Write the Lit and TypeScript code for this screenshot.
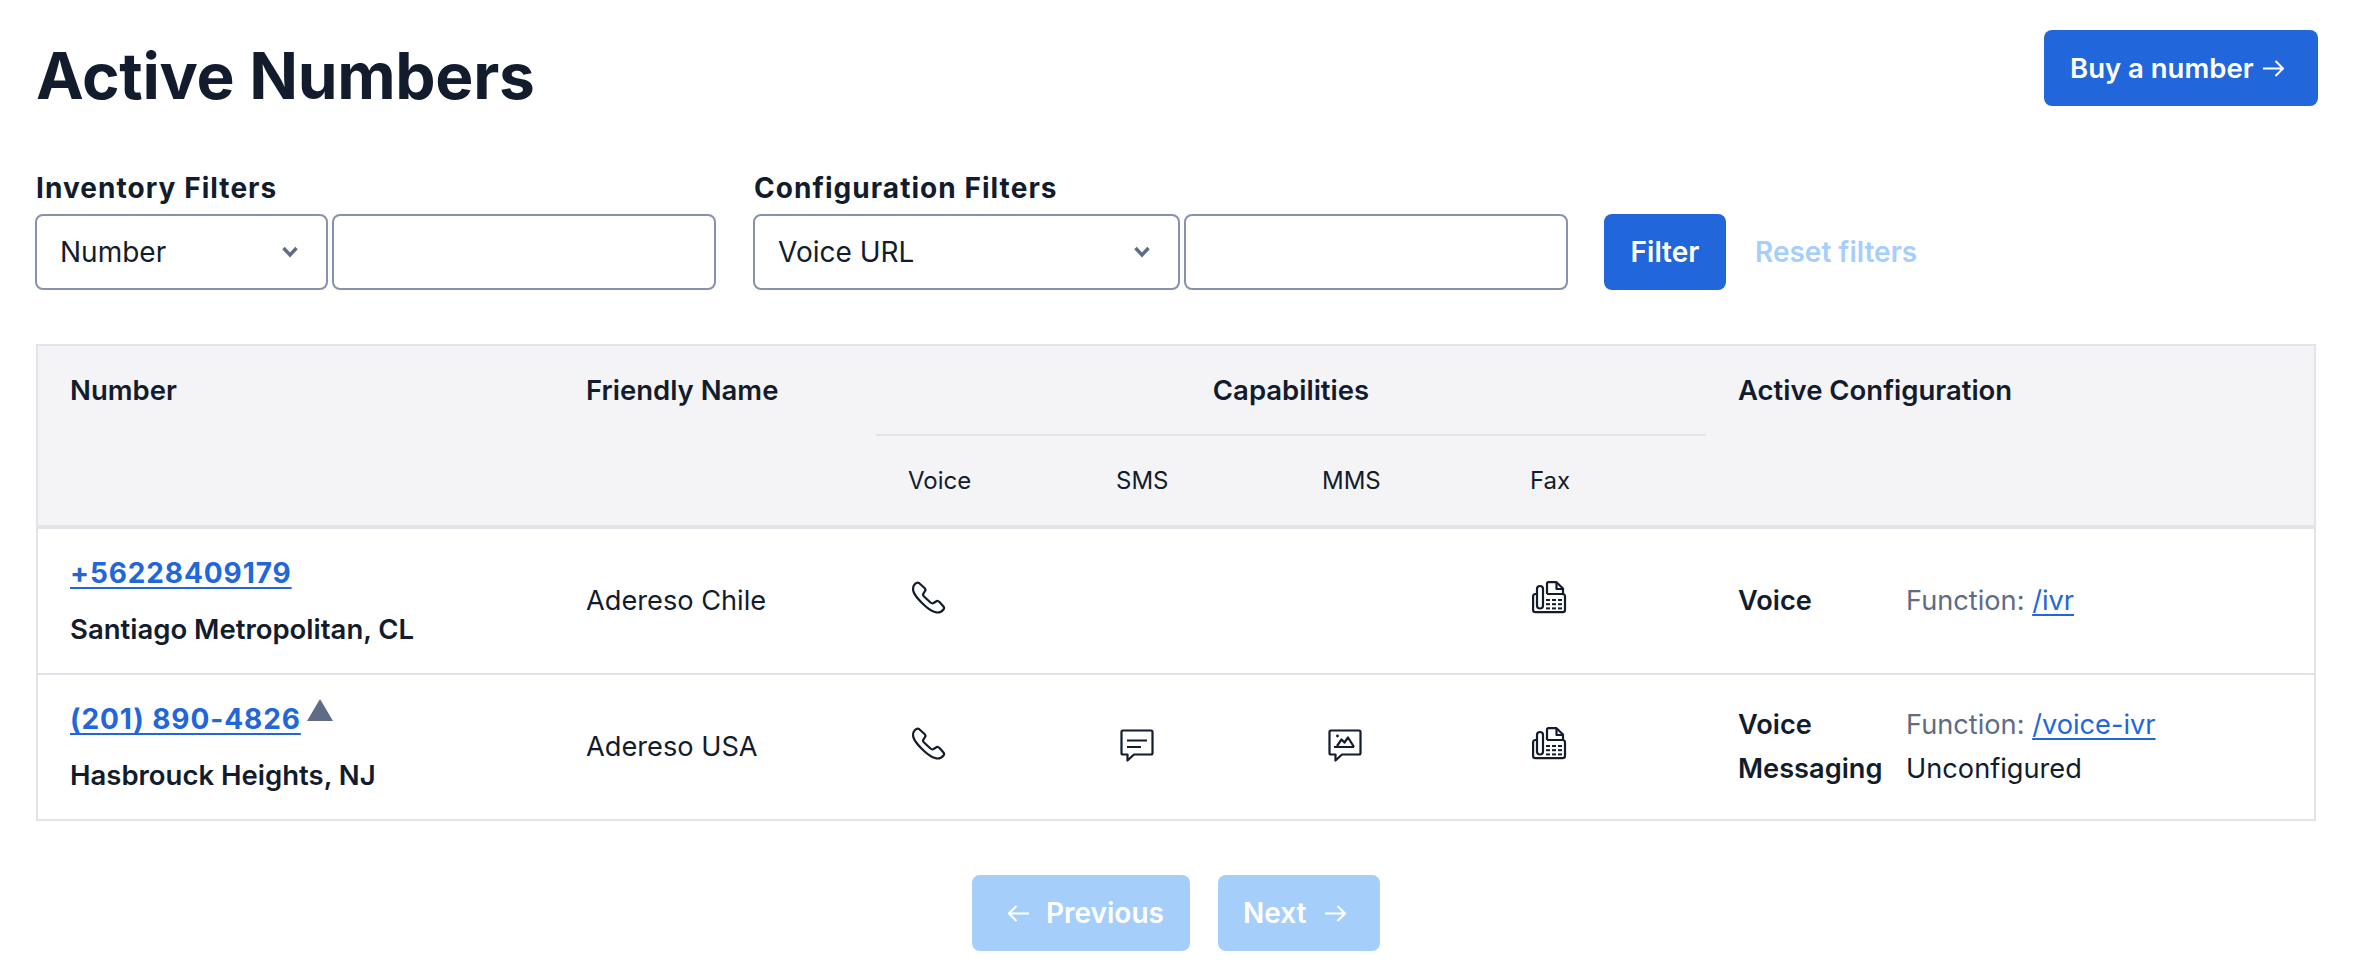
import { LitElement, html, css, svg } from "lit";
import { customElement } from "lit/decorators.js";

const arrowR = html`<svg class="arrow" viewBox="0 0 21 17" fill="none" stroke="currentColor" stroke-width="2"><path d="M0 8.5H20M12.5 1L20 8.5L12.5 16"/></svg>`;
const arrowL = html`<svg class="arrow" viewBox="0 0 21 17" fill="none" stroke="currentColor" stroke-width="2"><path d="M21 8.5H1M8.5 1L1 8.5L8.5 16"/></svg>`;
const chevron = html`<svg class="chev" viewBox="0 0 16 12" fill="none" stroke="#606b85" stroke-width="3.4"><path d="M1.5 2L8 9L14.5 2"/></svg>`;

const phone = html`<svg class="ico" width="34" height="34" viewBox="0 0 34 34" fill="none" stroke="#121c2d" stroke-width="2.2" stroke-linejoin="round"><path d="M7 2C5.5 1 4 2 3 3C1 5 .6 8 1.6 11C3 14.500 6 18 10 22C14 26 19 30 23 31C26 32 29.500 31 31.500 28.500C32.500 27.500 32.200 26.500 31.500 25.500L27.500 21C26.300 19.800 25 19.500 24 20.500L21.500 22C20.500 22.500 19.500 22.300 18.500 21.500L12 15.500C11 14.500 10.700 13.500 11.500 12.500L13 10C13.700 9 13.500 8 12.800 7.200Z"/></svg>`;

const sms = html`<svg class="ico" width="34" height="34" viewBox="0 -2 34 34" fill="none" stroke="#121c2d" stroke-width="2.2" stroke-linejoin="round"><path d="M3 1.500H31C32 1.500 32.500 2 32.500 3V24C32.500 25 32 25.500 31 25.500H14L7.500 31.500V25.500H3C2 25.500 1.500 25 1.500 24V3C1.500 2 2 1.500 3 1.500Z"/><path d="M7 11.500H27M7 18H21"/></svg>`;

const mms = html`<svg class="ico" width="34" height="34" viewBox="-2 -2 34 34" fill="none" stroke="#121c2d" stroke-width="2.2" stroke-linejoin="round"><path d="M3 1.500H31C32 1.500 32.500 2 32.500 3V24C32.500 25 32 25.500 31 25.500H14L7.500 31.500V25.500H3C2 25.500 1.500 25 1.500 24V3C1.500 2 2 1.500 3 1.500Z"/><path d="M6 18H26M26 18L20 8.500L16.500 13.500L13.500 10.500L9 17"/><circle cx="9.500" cy="7" r="1.400" fill="#121c2d" stroke="none"/></svg>`;

const faxKeys = [0, 1, 2].flatMap((r) =>
  [0, 1, 2].map((c) => svg`<rect x=${14 + c * 6} y=${18 + r * 4.2} width="4" height="2"/>`)
);
const fax = html`<svg class="ico" width="34" height="34" viewBox="2 0 34 34" fill="none" stroke="#121c2d" stroke-width="2.2" stroke-linejoin="round"><path d="M5 13H3.500C2 13 1.100 14 1.100 15.500V29C1.100 30.500 2 31.200 3.500 31.200H30.500C32 31.200 33 30.500 33 29V15.500C33 14 32 13 30.500 13H15"/><rect x="5" y="5" width="6" height="22.500" rx="3"/><path d="M15 13V2.500C15 1.700 15.500 1.200 16.300 1.200H24.500L31 7.500V13"/><path d="M24.500 1.200V8H31"/><g fill="#121c2d" stroke="none">${faxKeys}</g></svg>`;

@customElement("app-root")
export class AppRoot extends LitElement {
  static styles = css`
    :host {
      display: block;
      box-sizing: border-box;
      padding: 30px 48px 28px 36px;
      font-family: Inter, "Liberation Sans", sans-serif;
      color: #121c2d;
      font-size: 27.2px;
      background: #fff;
    }
    * { box-sizing: border-box; }
    .top {
      display: flex;
      justify-content: space-between;
      align-items: flex-start;
      height: 76px;
    }
    h1 {
      margin: 0;
      font-size: 64px;
      line-height: 91px;
      font-weight: 700;
      letter-spacing: -0.3px;
      color: #121c2d;
    }
    .btn {
      display: inline-flex;
      align-items: center;
      justify-content: center;
      height: 76px;
      border: 0;
      border-radius: 8px;
      font: inherit;
      font-size: 27.5px;
      font-weight: 600;
      color: #fff;
      background: #2166da;
      padding: 0;
    }
    .buy { width: 274px; gap: 9px; justify-content: flex-start; padding-left: 26px; }
    .arrow { width: 21px; height: 17px; flex: none; }
    .filters {
      display: flex;
      align-items: flex-end;
      margin: 64px 0 0 -1px;
    }
    .group { display: flex; flex-direction: column; }
    .group + .group { margin-left: 37px; }
    label {
      font-size: 28px;
      font-weight: 700;
      line-height: 36px;
      letter-spacing: 1.05px;
      margin: 0 0 8px 1px;
    }
    .controls { display: flex; gap: 4px; }
    .field {
      height: 76px;
      border: 2px solid #8891aa;
      border-radius: 8px;
      background: #fff;
      display: flex;
      align-items: center;
      justify-content: space-between;
      padding: 0 28px 0 23px;
      font-size: 28px;
    }
    .s1 { width: 293px; }
    .i1 { width: 384px; }
    .s2 { width: 427px; }
    .i2 { width: 384px; }
    .chev { width: 16px; height: 12px; }
    .btn.filter { width: 122px; margin-left: 36px; font-size: 28px; }
    .reset {
      height: 76px;
      display: flex;
      align-items: center;
      margin-left: 29px;
      font-size: 28px;
      font-weight: 600;
      color: #a6cefb;
    }
    table {
      width: 2280px;
      margin-top: 54px;
      border-collapse: separate;
      border-spacing: 0;
      table-layout: fixed;
      border: 2px solid #e1e3ea;
    }
    th, td { text-align: left; vertical-align: top; padding: 0 0 0 32px; }
    thead th { background: #f4f4f6; font-weight: 600; font-size: 27.5px; }
    .h1 th { height: 90px; padding-top: 27px; line-height: 34px; }
    .h1 th.cap { text-align: center; padding-left: 0; border-bottom: 2px solid #e1e3ea; }
    .h2 th {
      height: 93px;
      border-bottom: 4px solid #e1e3ea;
      font-size: 24px;
      font-weight: 400;
      padding-top: 28px;
      line-height: 34px;
    }
    tbody td { height: 144px; vertical-align: middle; line-height: 44px; }
    tbody tr.first td { height: 146px; border-bottom: 2px solid #e1e3ea; }
    .link {
      color: #2166da;
      text-decoration: underline;
      text-decoration-thickness: 2px;
      text-underline-offset: 4px;
    }
    .num .link { font-size: 28px; font-weight: 700; letter-spacing: 0.9px; }
    .numline { display: flex; align-items: center; gap: 6px; height: 44px; }
    .tri { width: 26px; height: 22px; margin-bottom: 18px; }
    .loc { display: block; font-size: 27.5px; font-weight: 600; margin-top: 12px; line-height: 44px; }
    tbody td.ic { vertical-align: top; padding-top: 52px; padding-left: 36px; }
    .ico { display: block; overflow: visible; }
    .cfg { display: grid; grid-template-columns: 168px auto; justify-content: start; }
    .cfg b { font-weight: 600; }
    .weak { color: #606b85; }
    .pager {
      display: flex;
      justify-content: center;
      gap: 28px;
      margin-top: 54px;
      padding-right: 2px;
    }
    .pager .btn { background: #a6cefb; color: #fff; font-size: 28px; justify-content: flex-start; }
    .btn.prev { width: 218px; padding-left: 36px; gap: 17px; }
    .btn.next { width: 162px; padding-left: 25px; gap: 18px; }
  `;

  render() {
    return html`
      <div class="top">
        <h1>Active Numbers</h1>
        <button class="btn buy">Buy a number ${arrowR}</button>
      </div>
      <div class="filters">
        <div class="group">
          <label>Inventory Filters</label>
          <div class="controls">
            <div class="field s1"><span>Number</span>${chevron}</div>
            <div class="field i1"></div>
          </div>
        </div>
        <div class="group">
          <label>Configuration Filters</label>
          <div class="controls">
            <div class="field s2"><span>Voice URL</span>${chevron}</div>
            <div class="field i2"></div>
          </div>
        </div>
        <button class="btn filter">Filter</button>
        <div class="reset">Reset filters</div>
      </div>
      <table>
        <colgroup>
          <col style="width:516px" /><col style="width:322px" /><col style="width:208px" />
          <col style="width:206px" /><col style="width:208px" /><col style="width:208px" /><col />
        </colgroup>
        <thead>
          <tr class="h1">
            <th>Number</th>
            <th>Friendly Name</th>
            <th class="cap" colspan="4">Capabilities</th>
            <th>Active Configuration</th>
          </tr>
          <tr class="h2">
            <th></th><th></th>
            <th>Voice</th><th>SMS</th><th>MMS</th><th>Fax</th>
            <th></th>
          </tr>
        </thead>
        <tbody>
          <tr class="first">
            <td>
              <div class="num numline"><a class="link">+56228409179</a></div>
              <span class="loc">Santiago Metropolitan, CL</span>
            </td>
            <td>Adereso Chile</td>
            <td class="ic">${phone}</td><td class="ic"></td><td class="ic"></td><td class="ic">${fax}</td>
            <td>
              <div class="cfg"><b>Voice</b><span class="weak">Function: <a class="link">/ivr</a></span></div>
            </td>
          </tr>
          <tr>
            <td>
              <div class="num numline"><a class="link">(201) 890-4826</a>
                <svg class="tri" viewBox="0 0 26 22" fill="#606b85"><path d="M13 0L26 22H0Z"/></svg>
              </div>
              <span class="loc">Hasbrouck Heights, NJ</span>
            </td>
            <td>Adereso USA</td>
            <td class="ic">${phone}</td><td class="ic">${sms}</td><td class="ic">${mms}</td><td class="ic">${fax}</td>
            <td>
              <div class="cfg">
                <b>Voice</b><span class="weak">Function: <a class="link">/voice-ivr</a></span>
                <b>Messaging</b><span>Unconfigured</span>
              </div>
            </td>
          </tr>
        </tbody>
      </table>
      <div class="pager">
        <button class="btn prev">${arrowL} Previous</button>
        <button class="btn next">Next ${arrowR}</button>
      </div>
    `;
  }
}
